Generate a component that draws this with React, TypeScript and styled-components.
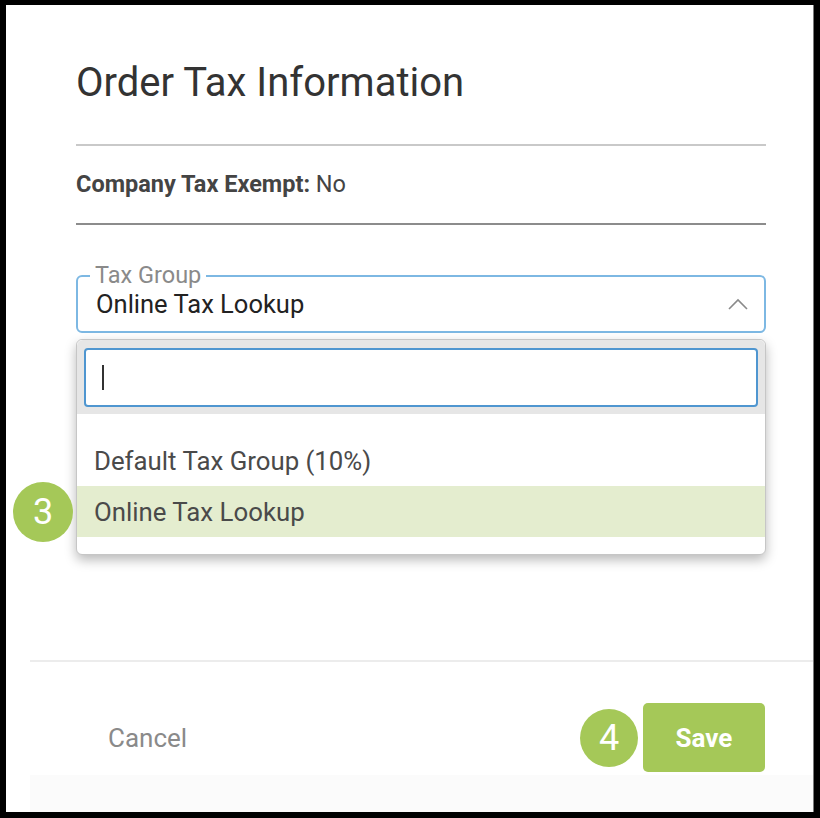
import styled, { createGlobalStyle } from "styled-components";

const GlobalStyle = createGlobalStyle`
  html, body {
    margin: 0;
    padding: 0;
    background: #000000;
  }
  * {
    box-sizing: border-box;
  }
`;

const Frame = styled.div`
  width: 820px;
  height: 818px;
  border-style: solid;
  border-color: #000000;
  border-width: 5px 6px 6px 6px;
  font-family: Roboto, "Liberation Sans", Arial, sans-serif;
`;

const Dialog = styled.div`
  display: flex;
  flex-direction: column;
  height: 100%;
  background: #ffffff;
  border-right: 1px solid #7a7a7a;
`;

const Body = styled.div`
  flex: 1;
  display: flex;
  flex-direction: column;
  padding: 54px 47px 0 70px;
`;

const Title = styled.h1`
  margin: 0;
  font-size: 40px;
  line-height: 47px;
  font-weight: 400;
  color: #333333;
`;

const Divider = styled.div<{ $color: string; $top: number }>`
  height: 2px;
  margin-top: ${(p) => p.$top}px;
  background: ${(p) => p.$color};
`;

const InfoLine = styled.div`
  margin-top: 24px;
  font-size: 23.5px;
  line-height: 28px;
  color: #444444;
  b {
    font-weight: 700;
  }
`;

const FieldWrap = styled.div`
  position: relative;
  margin-top: 50px;
`;

const Field = styled.div`
  position: relative;
  height: 58px;
  border: 2px solid #7db8e3;
  border-radius: 6px;
  display: flex;
  align-items: center;
  padding: 0 16px 0 18px;
`;

const Legend = styled.span`
  position: absolute;
  top: -16px;
  left: 12px;
  padding: 0 5px;
  background: #ffffff;
  font-size: 23.5px;
  line-height: 28px;
  color: #8a8a8a;
`;

const FieldValue = styled.span`
  flex: 1;
  font-size: 25.5px;
  line-height: 30px;
  color: #222222;
`;

const Menu = styled.div`
  position: absolute;
  top: 64px;
  left: 0;
  right: 0;
  background: #ffffff;
  border: 1px solid #c6c6c6;
  border-radius: 6px;
  box-shadow: 0 5px 12px rgba(0, 0, 0, 0.28);
`;

const SearchArea = styled.div`
  background: #e6e6e6;
  padding: 8px 7px 7px 7px;
  border-radius: 6px 6px 0 0;
`;

const SearchBox = styled.div`
  height: 59px;
  background: #ffffff;
  border: 2px solid #4f96d0;
  border-radius: 4px;
  display: flex;
  align-items: center;
  padding-left: 16px;
`;

const Caret = styled.span`
  width: 2px;
  height: 25px;
  background: #333333;
`;

const OptionList = styled.div`
  padding: 21px 0 17px 0;
`;

const Option = styled.div<{ $active?: boolean }>`
  position: relative;
  height: 51px;
  display: flex;
  align-items: center;
  padding-left: 17px;
  font-size: 25.8px;
  color: #4a4a4a;
  background: ${(p) => (p.$active ? "#e4edcf" : "transparent")};
`;

const StepBadge = styled.div<{ $size: number }>`
  width: ${(p) => p.$size}px;
  height: ${(p) => p.$size}px;
  border-radius: 50%;
  background: #a5c858;
  color: #ffffff;
  font-size: 36px;
  display: flex;
  align-items: center;
  justify-content: center;
  flex-shrink: 0;
`;

const OptionBadge = styled(StepBadge)`
  position: absolute;
  left: -64px;
  top: 50%;
  transform: translateY(-50%);
`;

const Footer = styled.div`
  margin-left: 24px;
  border-top: 2px solid #ececec;
  display: flex;
  flex-direction: column;
`;

const ButtonRow = styled.div`
  display: flex;
  align-items: center;
  justify-content: space-between;
  padding: 41px 48px 3px 78px;
`;

const CancelButton = styled.button`
  border: none;
  background: none;
  padding: 0;
  font-family: inherit;
  font-size: 26px;
  color: #8a8a8a;
  cursor: pointer;
`;

const SaveGroup = styled.div`
  display: flex;
  align-items: center;
  gap: 5px;
`;

const SaveButton = styled.button`
  width: 122px;
  height: 69px;
  border: none;
  border-radius: 5px;
  background: #a5c858;
  color: #ffffff;
  font-family: inherit;
  font-size: 26px;
  font-weight: 700;
  cursor: pointer;
`;

const BottomStrip = styled.div`
  height: 37px;
  background: #fbfbfb;
`;

const ChevronUp = () => (
  <svg width="20" height="12" viewBox="0 0 20 12" fill="none">
    <polyline
      points="1,11 10,2 19,11"
      stroke="#8a8a8a"
      strokeWidth="1.6"
      strokeLinejoin="miter"
    />
  </svg>
);

export default function App() {
  return (
    <>
      <GlobalStyle />
      <Frame>
        <Dialog>
          <Body>
            <Title>Order Tax Information</Title>
            <Divider $color="#c9c9c9" $top={38} />
            <InfoLine>
              <b>Company Tax Exempt:</b> No
            </InfoLine>
            <Divider $color="#8c8c8c" $top={25} />
            <FieldWrap>
              <Field>
                <Legend>Tax Group</Legend>
                <FieldValue>Online Tax Lookup</FieldValue>
                <ChevronUp />
              </Field>
              <Menu>
                <SearchArea>
                  <SearchBox>
                    <Caret />
                  </SearchBox>
                </SearchArea>
                <OptionList>
                  <Option>Default Tax Group (10%)</Option>
                  <Option $active>
                    <OptionBadge $size={60}>3</OptionBadge>
                    Online Tax Lookup
                  </Option>
                </OptionList>
              </Menu>
            </FieldWrap>
          </Body>
          <Footer>
            <ButtonRow>
              <CancelButton>Cancel</CancelButton>
              <SaveGroup>
                <StepBadge $size={58}>4</StepBadge>
                <SaveButton>Save</SaveButton>
              </SaveGroup>
            </ButtonRow>
            <BottomStrip />
          </Footer>
        </Dialog>
      </Frame>
    </>
  );
}
